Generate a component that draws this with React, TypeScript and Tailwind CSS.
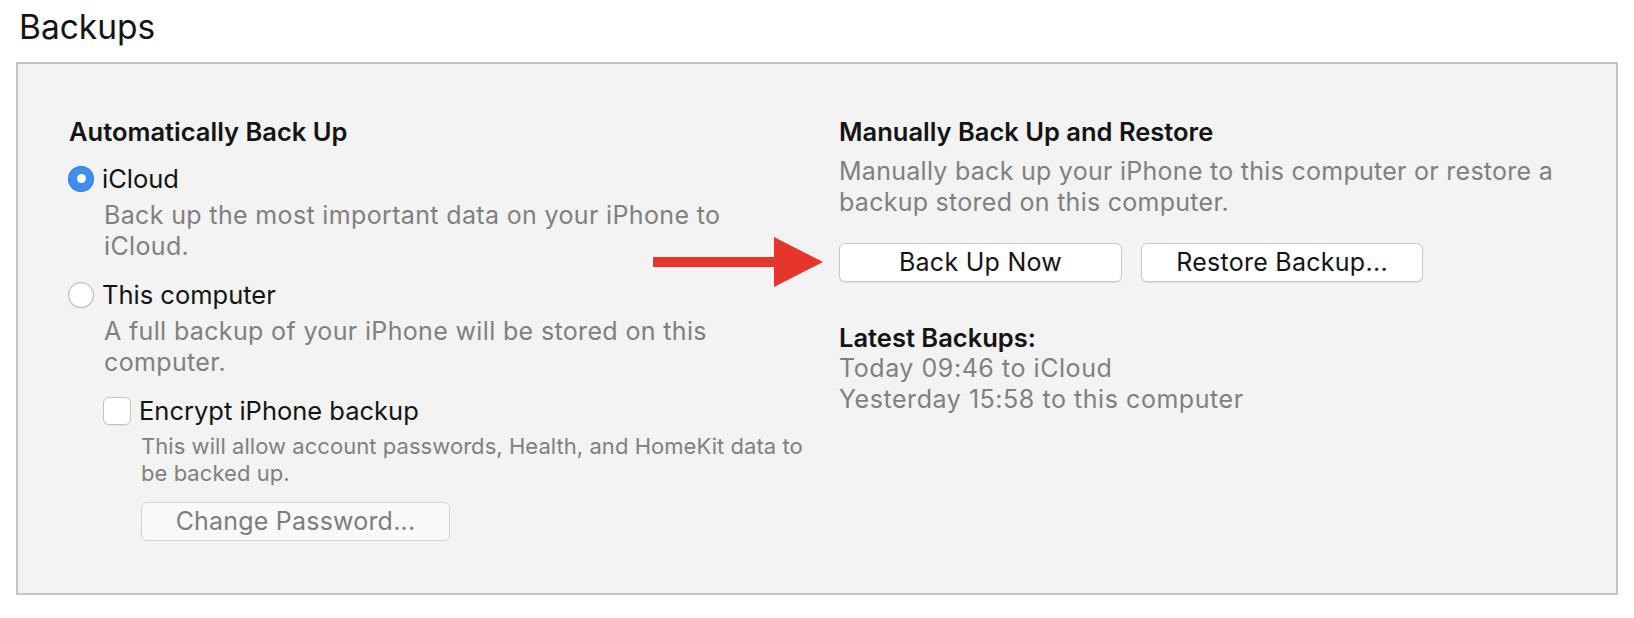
function Radio({ checked }: { checked?: boolean }) {
  if (checked) {
    return (
      <span className="flex h-[26px] w-[26px] shrink-0 items-center justify-center rounded-full bg-[#3d8ef0] shadow-[inset_0_0_0_1px_rgba(30,100,200,0.35)]">
        <span className="h-[9px] w-[9px] rounded-full bg-white" />
      </span>
    )
  }
  return (
    <span className="h-[26px] w-[26px] shrink-0 rounded-full border border-[#b4b4b4] bg-white shadow-[0_1px_1px_rgba(0,0,0,0.06)]" />
  )
}

function Checkbox() {
  return (
    <span className="h-[28px] w-[28px] shrink-0 rounded-[6px] border border-[#c4c4c4] bg-white shadow-[0_1px_1px_rgba(0,0,0,0.06)]" />
  )
}

function Arrow() {
  return (
    <svg
      className="absolute left-[635px] top-[173px]"
      width="170"
      height="50"
      viewBox="0 0 170 50"
    >
      <rect x="0" y="20" width="125" height="10" fill="#e6352a" />
      <polygon points="121,0 170,25 121,50" fill="#e6352a" />
    </svg>
  )
}

export default function App() {
  return (
    <div className="min-h-screen bg-white px-4 pt-[7px] font-[Inter,'Liberation_Sans',sans-serif] text-[#141414]">
      <h1 className="pl-[3px] text-[33.5px] font-normal leading-[40px]">Backups</h1>

      <div className="relative mt-[15px] h-[533px] border-2 border-[#c4c4c4] bg-[#f3f3f3]">
        <div className="grid grid-cols-[771px_1fr] pl-[50px] pt-[52px]">
          {/* Automatic */}
          <div>
            <h2 className="pl-px text-[25.5px] font-semibold leading-[31px]">Automatically Back Up</h2>

            <label className="mt-[16px] flex items-center gap-2 text-[25.5px] leading-[31px]">
              <Radio checked />
              iCloud
            </label>
            <p className="mt-[6px] pl-[36px] text-[25px] leading-[31px] tracking-[0.35px] text-[#808080]">
              Back up the most important data on your iPhone to
              <br />
              iCloud.
            </p>

            <label className="mt-[17px] flex items-center gap-2 text-[25.5px] leading-[31px]">
              <Radio />
              This computer
            </label>
            <p className="mt-[6px] pl-[36px] text-[25px] leading-[31px] tracking-[0.35px] text-[#808080]">
              A full backup of your iPhone will be stored on this
              <br />
              computer.
            </p>

            <label className="mt-[17px] ml-[35px] flex items-center gap-2 text-[25.5px] leading-[31px]">
              <Checkbox />
              Encrypt iPhone backup
            </label>
            <p className="mt-[7px] pl-[73px] text-[22px] leading-[27px] tracking-[0.05px] text-[#808080]">
              This will allow account passwords, Health, and HomeKit data to
              <br />
              be backed up.
            </p>
            <button className="mt-[15px] ml-[73px] block h-[39px] w-[309px] rounded-[6px] border border-[#d3d3d3] bg-[#f9f9f9] text-[25px] tracking-[0.2px] text-[#7d7d7d]">
              Change Password...
            </button>
          </div>

          {/* Manual */}
          <div>
            <h2 className="text-[25.5px] font-semibold leading-[31px]">Manually Back Up and Restore</h2>
            <p className="mt-[9px] text-[25px] leading-[31px] tracking-[0.27px] text-[#808080]">
              Manually back up your iPhone to this computer or restore a
              <br />
              backup stored on this computer.
            </p>
            <div className="mt-[25px] flex gap-[19px]">
              <button className="block h-[39px] w-[283px] rounded-[6px] border border-[#c9c9c9] bg-white text-[25px] tracking-[0.27px] shadow-[0_1px_1px_rgba(0,0,0,0.08)]">
                Back Up Now
              </button>
              <button className="block h-[39px] w-[282px] rounded-[6px] border border-[#c9c9c9] bg-white text-[25px] tracking-[0.27px] shadow-[0_1px_1px_rgba(0,0,0,0.08)]">
                Restore Backup...
              </button>
            </div>
            <h3 className="mt-[40px] text-[25.5px] font-semibold leading-[31px]">Latest Backups:</h3>
            <p className="text-[25px] leading-[31px] tracking-[0.55px] text-[#808080]">
              Today 09:46 to iCloud
              <br />
              Yesterday 15:58 to this computer
            </p>
          </div>
        </div>

        <Arrow />
      </div>
    </div>
  )
}
